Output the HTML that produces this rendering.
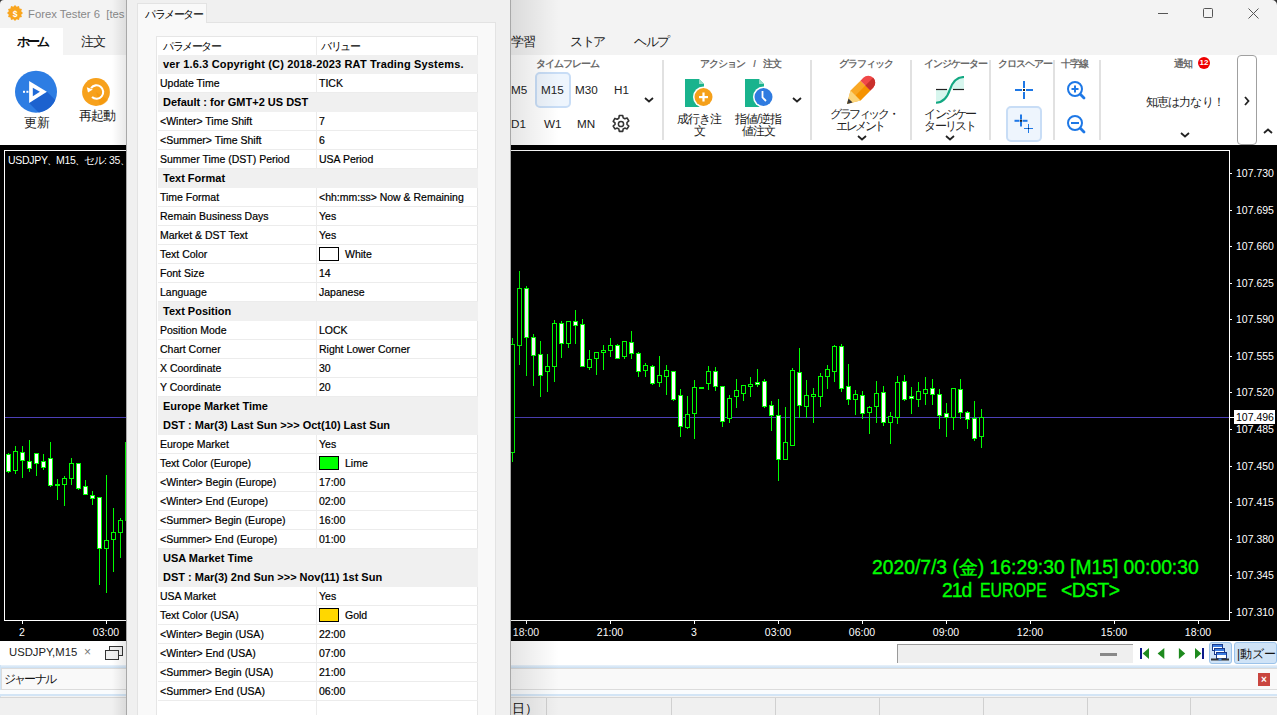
<!DOCTYPE html>
<html><head><meta charset="utf-8"><style>
*{margin:0;padding:0;box-sizing:border-box}
html,body{width:1277px;height:715px;overflow:hidden;background:#f3f3f3;font-family:"Liberation Sans",sans-serif;color:#000;position:relative}
.a{position:absolute;white-space:pre}
#title{position:absolute;left:0;top:0;width:1277px;height:55px;background:#f3f3f3}
#ribbon{position:absolute;left:0;top:55px;width:1277px;height:90px;background:#fff}
#chart{position:absolute;left:0;top:145px;width:1277px;height:496px;background:#000}
svg text.ax{font-family:"Liberation Sans",sans-serif;font-size:10.5px;fill:#fff}
.sep{position:absolute;top:60px;width:2px;height:80px;background:#e1e1e1}
.glbl{position:absolute;top:57px;font-size:9.5px;font-weight:bold;letter-spacing:-1px;color:#6a6a6a;white-space:pre}
.btxt{position:absolute;font-size:12px;color:#222;white-space:pre;text-align:center;line-height:12px}
.tf{position:absolute;font-size:11.7px;color:#222;white-space:pre}
/* dialog */
#dlg{position:absolute;left:126px;top:0;width:385px;height:715px;background:#f0f0f0;border-left:1px solid #a8a8a8;border-right:1px solid #a8a8a8}
#shadowL{position:absolute;left:112px;top:0;width:16px;height:715px;background:linear-gradient(to right,rgba(0,0,0,0),rgba(0,0,0,0.10))}
#shadowR{position:absolute;left:511px;top:0;width:48px;height:715px;background:linear-gradient(to right,rgba(0,0,0,0.10),rgba(0,0,0,0))}
#tab{position:absolute;left:10px;top:3px;width:70px;height:20px;background:#f9f9f9;border:1px solid #e3e3e3;border-bottom:none;font-size:10.5px;letter-spacing:-1.5px;padding:4px 0 0 7px;white-space:pre;overflow:hidden;z-index:2}
#panel{position:absolute;left:10px;top:22px;width:359px;height:700px;background:#f9f9f9;border:1px solid #e3e3e3}
#grid{position:absolute;left:29px;top:36px;width:322px;height:690px;background:#fff;border:1px solid #e6e6e6}
.hdr{position:absolute;top:0;height:18px;font-size:10.5px;letter-spacing:-1.5px;line-height:18px;white-space:pre}
.sec{position:absolute;left:1px;width:320px;height:19px;background:#f0f0f0;font-weight:bold;font-size:11px;line-height:19px;padding-left:5px;white-space:pre;margin-top:-37px}
.row{position:absolute;left:1px;width:320px;height:19px;border-bottom:1px solid #ececec;font-size:10.5px;line-height:18px;white-space:pre;margin-top:-37px;-webkit-text-stroke:0.2px #000}
.row .k{position:absolute;left:2px;top:0}
.row .v{position:absolute;left:161px;top:0}
.sw{position:absolute;left:0;top:2px;width:20px;height:14px;border:1px solid #000}
#coldiv{position:absolute;left:159px;top:0;width:1px;height:690px;background:#ececec}

</style></head><body>
<div id="title">
  <svg class="a" style="left:6px;top:4px" width="18" height="18" viewBox="0 0 18 18">
    <polygon points="9.00,1.00 10.66,2.82 13.00,2.07 13.53,4.47 15.93,5.00 15.18,7.34 17.00,9.00 15.18,10.66 15.93,13.00 13.53,13.53 13.00,15.93 10.66,15.18 9.00,17.00 7.34,15.18 5.00,15.93 4.47,13.53 2.07,13.00 2.82,10.66 1.00,9.00 2.82,7.34 2.07,5.00 4.47,4.47 5.00,2.07 7.34,2.82" fill="#f9a51e"/>
    <text x="9" y="12.6" font-size="8.5" font-weight="bold" fill="#fff" text-anchor="middle" font-family="Liberation Sans">$</text>
  </svg>
  <div class="a" style="left:28px;top:8px;font-size:11.3px;color:#888">Forex Tester 6  [tes</div>
  <div class="a" style="left:0;top:28px;width:63px;height:27px;background:#fff"></div>
  <div class="a" style="left:17px;top:34px;font-size:12.5px;font-weight:bold;letter-spacing:-2.8px;color:#111">ホーム</div>
  <div class="a" style="left:81px;top:34px;font-size:12.5px;letter-spacing:-1.5px;color:#222">注文</div>
  <div class="a" style="left:511px;top:34px;font-size:12.5px;letter-spacing:-1.5px;color:#222">学習</div>
  <div class="a" style="left:570px;top:34px;font-size:12.5px;letter-spacing:-1.5px;color:#222">ストア</div>
  <div class="a" style="left:634px;top:34px;font-size:12.5px;letter-spacing:-1.5px;color:#222">ヘルプ</div>
  <div class="a" style="left:1158px;top:13px;width:10px;height:1px;background:#555"></div>
  <div class="a" style="left:1203px;top:8px;width:10px;height:10px;border:1px solid #555;border-radius:1.5px"></div>
  <svg class="a" style="left:1248px;top:8px" width="11" height="11"><path d="M0.5 0.5L10.5 10.5M10.5 0.5L0.5 10.5" stroke="#555" stroke-width="1"/></svg>
</div>
<svg class="a" style="left:0;top:0" width="4" height="4"><path d="M0 0H4A4 4 0 0 0 0 4Z" fill="#333"/></svg>
<svg class="a" style="left:1272px;top:0" width="5" height="5"><path d="M5 0H0A5 5 0 0 1 5 5Z" fill="#333"/></svg>
<div id="ribbon">
  <!-- refresh -->
  <svg class="a" style="left:14px;top:15px" width="44" height="44" viewBox="0 0 44 44">
    <defs><clipPath id="cc"><circle cx="22" cy="21.7" r="21"/></clipPath></defs>
    <circle cx="22" cy="21.7" r="21" fill="#2d7de3"/>
    <path d="M33 21.8 L46 34.8 L30 48 L15.1 32.9 Z" fill="#1c62cf" clip-path="url(#cc)"/>
    <path d="M15.1 11.1 L32.9 21.8 L15.1 32.9 Z" fill="#fff"/>
    <path d="M18.8 17.8 L25.9 21.8 L18.8 26.2 Z" fill="#1f6ad8"/>
    <rect x="9" y="20.8" width="2" height="2" fill="#fff"/><rect x="12.4" y="20.8" width="2" height="2" fill="#fff"/>
  </svg>
  <div class="btxt" style="left:24px;top:62px;font-size:12.5px">更新</div>
  <svg class="a" style="left:82px;top:23px" width="28" height="28" viewBox="0 0 28 28">
    <circle cx="14" cy="14" r="13.9" fill="#f7a11c"/>
    <path d="M14 14 L26 22 A13.9 13.9 0 0 1 18 27.5 Z" fill="#f39300" opacity="0.5"/>
    <path d="M9.08 10.06 A6.7 6.7 0 1 1 10.02 18.98" fill="none" stroke="#fff" stroke-width="2.1"/>
    <path d="M4.8 9.2 L10.8 11.6 L6 14.4 Z" fill="#fff"/>
  </svg>
  <div class="btxt" style="left:79px;top:55px;font-size:12.5px;letter-spacing:-1px">再起動</div>

  <!-- timeframe group -->
  <div class="glbl" style="left:536px;top:3px">タイムフレーム</div>
  <div class="a" style="left:535px;top:17px;width:36px;height:36px;background:#eef5fd;border:2px solid #c8ddf6;border-radius:5px"></div>
  <div class="tf" style="left:511px;top:28px">M5</div>
  <div class="tf" style="left:541px;top:28px">M15</div>
  <div class="tf" style="left:575px;top:28px">M30</div>
  <div class="tf" style="left:614px;top:28px">H1</div>
  <div class="tf" style="left:511px;top:62px">D1</div>
  <div class="tf" style="left:544px;top:62px">W1</div>
  <div class="tf" style="left:577px;top:62px">MN</div>
  <svg class="a" style="left:611px;top:59px" width="20" height="20" viewBox="0 0 20 20">
    <path d="M8.3 1.5h3.4l.5 2.4 1.6.9 2.3-.8 1.7 2.9-1.8 1.6v1.9l1.8 1.6-1.7 2.9-2.3-.8-1.6.9-.5 2.4H8.3l-.5-2.4-1.6-.9-2.3.8-1.7-2.9 1.8-1.6V8.9L2.2 7.3l1.7-2.9 2.3.8 1.6-.9z" fill="none" stroke="#333" stroke-width="1.6" stroke-linejoin="round"/>
    <circle cx="10" cy="10" r="2.6" fill="none" stroke="#333" stroke-width="1.5"/>
  </svg>
  <svg class="a" style="left:644px;top:42px" width="10" height="6"><path d="M1 1L5 4.5L9 1" fill="none" stroke="#222" stroke-width="1.8"/></svg>
  <div class="sep" style="left:662px;top:5px"></div>

  <!-- action group -->
  <div class="glbl" style="left:700px;top:3px">アクション     /     注文</div>
  <svg class="a" style="left:684px;top:24px" width="32" height="30" viewBox="0 0 32 30">
    <path d="M1 0 H15 L20 5 V28 H1 Z" fill="#19b38d"/>
    <path d="M15 0 L20 5 H15 Z" fill="#8fdcc6"/>
    <circle cx="19.5" cy="18" r="10.5" fill="#fff"/>
    <circle cx="19.5" cy="18" r="9" fill="#f5a01a"/>
    <rect x="15" y="17" width="9" height="2.2" fill="#fff"/><rect x="18.4" y="13.5" width="2.2" height="9" fill="#fff"/>
  </svg>
  <div class="btxt" style="left:672px;top:58px;width:54px;letter-spacing:-1px">成行き注<br>文</div>
  <svg class="a" style="left:744px;top:24px" width="32" height="30" viewBox="0 0 32 30">
    <path d="M1 0 H15 L20 5 V28 H1 Z" fill="#19b38d"/>
    <path d="M15 0 L20 5 H15 Z" fill="#8fdcc6"/>
    <circle cx="19.5" cy="18" r="10.5" fill="#fff"/>
    <circle cx="19.5" cy="18" r="9" fill="#2f7be0"/>
    <path d="M18.5 12 V18.5 L22 22" fill="none" stroke="#fff" stroke-width="1.8"/>
  </svg>
  <div class="btxt" style="left:729px;top:58px;width:58px;letter-spacing:-1px">指値/逆指<br>値注文</div>
  <svg class="a" style="left:792px;top:42px" width="10" height="6"><path d="M1 1L5 4.5L9 1" fill="none" stroke="#222" stroke-width="1.8"/></svg>
  <div class="sep" style="left:810px;top:5px"></div>

  <!-- graphic -->
  <div class="glbl" style="left:839px;top:3px">グラフィック</div>
  <svg class="a" style="left:835px;top:13px" width="45" height="45" viewBox="0 0 45 45">
    <g transform="translate(12,36) rotate(-45)">
      <path d="M0 0 L12 -7 H26 V7 H12 Z" fill="#f9a825"/>
      <rect x="12" y="0" width="14" height="7" fill="#f59300"/>
      <path d="M0 0 L12 -7 V7 Z" fill="#fbd47a"/>
      <path d="M0 0 L5 -2.9 V2.9 Z" fill="#3a3a3a"/>
      <path d="M26 -7 H30 A7 7 0 0 1 30 7 H26 Z" fill="#f04848"/>
      <path d="M26 0 H37 A7 7 0 0 1 30 7 H26 Z" fill="#c9302c"/>
    </g>
  </svg>
  <div class="btxt" style="left:830px;top:53px;width:60px;letter-spacing:-2.4px">グラフィック・<br>エレメント</div>
  <svg class="a" style="left:857px;top:80px" width="10" height="6"><path d="M1 1L5 4.5L9 1" fill="none" stroke="#222" stroke-width="1.8"/></svg>
  <div class="sep" style="left:910px;top:5px"></div>

  <!-- indicator -->
  <div class="glbl" style="left:924px;top:3px">インジケーター</div>
  <svg class="a" style="left:936px;top:21px" width="30" height="30" viewBox="0 0 30 30">
    <path d="M0 13.4 H14 C11.5 21 8 26.7 0 26.7 Z" fill="#d7f6ee"/>
    <path d="M14 13.4 C16.5 6 20 1 28 1 V13.4 Z" fill="#d7f6ee"/>
    <path d="M0 26.7 C8 26.7 11.5 21 14 13.4 C16.5 6 20 1 28 1" fill="none" stroke="#12a882" stroke-width="2.1"/>
    <rect x="0" y="12.9" width="11" height="1.2" fill="#222"/><rect x="17" y="12.9" width="11" height="1.2" fill="#222"/>
  </svg>
  <div class="btxt" style="left:920px;top:53px;width:60px;letter-spacing:-1.8px">インジケー<br>ターリスト</div>
  <svg class="a" style="left:945px;top:80px" width="10" height="6"><path d="M1 1L5 4.5L9 1" fill="none" stroke="#222" stroke-width="1.8"/></svg>
  <div class="sep" style="left:989px;top:5px"></div>

  <!-- crosshair -->
  <div class="glbl" style="left:998px;top:3px">クロスヘアー</div>
  <svg class="a" style="left:1014px;top:25px" width="20" height="20">
    <rect x="9" y="1" width="2" height="7" fill="#1e78e6"/><rect x="9" y="12" width="2" height="7" fill="#1e78e6"/>
    <rect x="1" y="9" width="7" height="2" fill="#1e78e6"/><rect x="12" y="9" width="7" height="2" fill="#1e78e6"/>
    <rect x="9" y="9" width="2" height="2" fill="#222"/>
  </svg>
  <div class="a" style="left:1006px;top:51px;width:36px;height:36px;background:#eef5fd;border:2px solid #c8ddf6;border-radius:5px"></div>
  <svg class="a" style="left:1012px;top:58px" width="24" height="22">
    <rect x="8" y="1.5" width="2" height="5" fill="#1e78e6"/><rect x="8" y="8.5" width="2" height="5" fill="#1e78e6"/>
    <rect x="2.5" y="6.8" width="5" height="2" fill="#1e78e6"/><rect x="10.5" y="6.8" width="5" height="2" fill="#1e78e6"/>
    <rect x="8" y="6.8" width="2" height="2" fill="#222"/>
    <rect x="16" y="11" width="1" height="4" fill="#1e78e6"/><rect x="16" y="16" width="1" height="4" fill="#1e78e6"/>
    <rect x="12" y="15" width="4" height="1" fill="#1e78e6"/><rect x="17" y="15" width="4" height="1" fill="#1e78e6"/>
    <rect x="16" y="15" width="1" height="1" fill="#222"/>
  </svg>
  <div class="sep" style="left:1053px;top:5px"></div>

  <div class="glbl" style="left:1061px;top:3px">十字線</div>
  <svg class="a" style="left:1066px;top:25px" width="20" height="20">
    <circle cx="9" cy="9" r="7" fill="none" stroke="#1e78e6" stroke-width="2"/>
    <path d="M14.3 14.3 L18 18" stroke="#1e78e6" stroke-width="2.8" stroke-linecap="round"/>
    <rect x="5.5" y="8" width="7" height="2" fill="#1e78e6"/><rect x="8" y="5.5" width="2" height="7" fill="#1e78e6"/>
  </svg>
  <svg class="a" style="left:1066px;top:59px" width="20" height="20">
    <circle cx="9" cy="9" r="7" fill="none" stroke="#1e78e6" stroke-width="2"/>
    <path d="M14.3 14.3 L18 18" stroke="#1e78e6" stroke-width="2.8" stroke-linecap="round"/>
    <rect x="5" y="8" width="8" height="2" fill="#1e78e6"/>
  </svg>
  <div class="sep" style="left:1099px;top:5px"></div>

  <div class="glbl" style="left:1174px;top:3px">通知</div>
  <div class="a" style="left:1198px;top:2px;width:12px;height:12px;border-radius:6px;background:#e00;color:#fff;font-size:8px;font-weight:bold;line-height:12px;text-align:center">12</div>
  <div class="a" style="left:1146px;top:39px;font-size:12px;letter-spacing:-0.9px;color:#222">知恵は力なり！</div>
  <svg class="a" style="left:1180px;top:77px" width="10" height="6"><path d="M1 1L5 4.5L9 1" fill="none" stroke="#222" stroke-width="1.8"/></svg>
  <div class="a" style="left:1237px;top:0px;width:20px;height:90px;border:1px solid #a0a0a0;border-radius:4px"></div>
  <svg class="a" style="left:1244px;top:41px" width="6" height="10"><path d="M1 1L4.5 5L1 9" fill="none" stroke="#222" stroke-width="1.8"/></svg>
  <svg class="a" style="left:1263px;top:73px" width="10" height="6"><path d="M1 5L5 1.5L9 5" fill="none" stroke="#222" stroke-width="1.8"/></svg>
</div>

<div id="chart">
<svg width="1277" height="496" viewBox="0 145 1277 496" style="position:absolute;left:0;top:0" shape-rendering="crispEdges">
  <rect x="4" y="150" width="1226" height="1" fill="#fff"/>
  <rect x="4" y="150" width="1" height="471" fill="#fff"/>
  <rect x="1229" y="150" width="1" height="471" fill="#fff"/>
  <rect x="4" y="620" width="1226" height="1" fill="#fff"/>
  <rect x="5" y="417" width="1224" height="1" fill="#4d40b8"/>
  <rect x="512" y="338" width="1" height="6" fill="#00ff00"/><rect x="512" y="453" width="1" height="9" fill="#00ff00"/><rect x="510" y="344" width="5" height="109" fill="#00ff00"/><rect x="511" y="345" width="3" height="107" fill="#000000"/>
<rect x="519" y="271" width="1" height="17" fill="#00ff00"/><rect x="519" y="346" width="1" height="19" fill="#00ff00"/><rect x="517" y="288" width="5" height="58" fill="#00ff00"/><rect x="518" y="289" width="3" height="56" fill="#000000"/>
<rect x="526" y="286" width="1" height="2" fill="#00ff00"/><rect x="526" y="338" width="1" height="38" fill="#00ff00"/><rect x="524" y="288" width="5" height="50" fill="#00ff00"/><rect x="525" y="289" width="3" height="48" fill="#ffffff"/>
<rect x="533" y="334" width="1" height="3" fill="#00ff00"/><rect x="533" y="356" width="1" height="30" fill="#00ff00"/><rect x="531" y="337" width="5" height="19" fill="#00ff00"/><rect x="532" y="338" width="3" height="17" fill="#ffffff"/>
<rect x="540" y="341" width="1" height="13" fill="#00ff00"/><rect x="540" y="376" width="1" height="21" fill="#00ff00"/><rect x="538" y="354" width="5" height="22" fill="#00ff00"/><rect x="539" y="355" width="3" height="20" fill="#ffffff"/>
<rect x="547" y="354" width="1" height="12" fill="#00ff00"/><rect x="547" y="372" width="1" height="20" fill="#00ff00"/><rect x="545" y="366" width="5" height="6" fill="#00ff00"/><rect x="546" y="367" width="3" height="4" fill="#000000"/>
<rect x="554" y="320" width="1" height="3" fill="#00ff00"/><rect x="554" y="367" width="1" height="15" fill="#00ff00"/><rect x="552" y="323" width="5" height="44" fill="#00ff00"/><rect x="553" y="324" width="3" height="42" fill="#000000"/>
<rect x="561" y="321" width="1" height="2" fill="#00ff00"/><rect x="561" y="344" width="1" height="14" fill="#00ff00"/><rect x="559" y="323" width="5" height="21" fill="#00ff00"/><rect x="560" y="324" width="3" height="19" fill="#ffffff"/>
<rect x="568" y="344" width="1" height="4" fill="#00ff00"/><rect x="566" y="321" width="5" height="23" fill="#00ff00"/><rect x="567" y="322" width="3" height="21" fill="#000000"/>
<rect x="575" y="310" width="1" height="11" fill="#00ff00"/><rect x="575" y="326" width="1" height="18" fill="#00ff00"/><rect x="573" y="321" width="5" height="5" fill="#00ff00"/><rect x="574" y="322" width="3" height="3" fill="#ffffff"/>
<rect x="582" y="319" width="1" height="5" fill="#00ff00"/><rect x="580" y="324" width="5" height="43" fill="#00ff00"/><rect x="581" y="325" width="3" height="41" fill="#ffffff"/>
<rect x="589" y="350" width="1" height="9" fill="#00ff00"/><rect x="589" y="368" width="1" height="2" fill="#00ff00"/><rect x="587" y="359" width="5" height="9" fill="#00ff00"/><rect x="588" y="360" width="3" height="7" fill="#000000"/>
<rect x="596" y="359" width="1" height="16" fill="#00ff00"/><rect x="594" y="352" width="5" height="7" fill="#00ff00"/><rect x="595" y="353" width="3" height="5" fill="#000000"/>
<rect x="603" y="345" width="1" height="5" fill="#00ff00"/><rect x="603" y="353" width="1" height="17" fill="#00ff00"/><rect x="601" y="350" width="5" height="3" fill="#00ff00"/><rect x="602" y="351" width="3" height="1" fill="#000000"/>
<rect x="610" y="338" width="1" height="7" fill="#00ff00"/><rect x="610" y="351" width="1" height="6" fill="#00ff00"/><rect x="608" y="345" width="5" height="6" fill="#00ff00"/><rect x="609" y="346" width="3" height="4" fill="#000000"/>
<rect x="617" y="344" width="1" height="1" fill="#00ff00"/><rect x="615" y="345" width="5" height="14" fill="#00ff00"/><rect x="616" y="346" width="3" height="12" fill="#ffffff"/>
<rect x="624" y="357" width="1" height="2" fill="#00ff00"/><rect x="622" y="341" width="5" height="16" fill="#00ff00"/><rect x="623" y="342" width="3" height="14" fill="#000000"/>
<rect x="631" y="331" width="1" height="11" fill="#00ff00"/><rect x="631" y="354" width="1" height="5" fill="#00ff00"/><rect x="629" y="342" width="5" height="12" fill="#00ff00"/><rect x="630" y="343" width="3" height="10" fill="#ffffff"/>
<rect x="638" y="352" width="1" height="1" fill="#00ff00"/><rect x="638" y="372" width="1" height="5" fill="#00ff00"/><rect x="636" y="353" width="5" height="19" fill="#00ff00"/><rect x="637" y="354" width="3" height="17" fill="#ffffff"/>
<rect x="645" y="363" width="1" height="2" fill="#00ff00"/><rect x="645" y="371" width="1" height="6" fill="#00ff00"/><rect x="643" y="365" width="5" height="6" fill="#00ff00"/><rect x="644" y="366" width="3" height="4" fill="#000000"/>
<rect x="652" y="365" width="1" height="1" fill="#00ff00"/><rect x="652" y="384" width="1" height="1" fill="#00ff00"/><rect x="650" y="366" width="5" height="18" fill="#00ff00"/><rect x="651" y="367" width="3" height="16" fill="#ffffff"/>
<rect x="659" y="356" width="1" height="19" fill="#00ff00"/><rect x="659" y="383" width="1" height="4" fill="#00ff00"/><rect x="657" y="375" width="5" height="8" fill="#00ff00"/><rect x="658" y="376" width="3" height="6" fill="#000000"/>
<rect x="666" y="365" width="1" height="5" fill="#00ff00"/><rect x="666" y="377" width="1" height="18" fill="#00ff00"/><rect x="664" y="370" width="5" height="7" fill="#00ff00"/><rect x="665" y="371" width="3" height="5" fill="#000000"/>
<rect x="673" y="400" width="1" height="1" fill="#00ff00"/><rect x="671" y="371" width="5" height="29" fill="#00ff00"/><rect x="672" y="372" width="3" height="27" fill="#ffffff"/>
<rect x="680" y="389" width="1" height="6" fill="#00ff00"/><rect x="680" y="427" width="1" height="10" fill="#00ff00"/><rect x="678" y="395" width="5" height="32" fill="#00ff00"/><rect x="679" y="396" width="3" height="30" fill="#ffffff"/>
<rect x="687" y="396" width="1" height="18" fill="#00ff00"/><rect x="687" y="428" width="1" height="1" fill="#00ff00"/><rect x="685" y="414" width="5" height="14" fill="#00ff00"/><rect x="686" y="415" width="3" height="12" fill="#000000"/>
<rect x="694" y="380" width="1" height="7" fill="#00ff00"/><rect x="694" y="414" width="1" height="25" fill="#00ff00"/><rect x="692" y="387" width="5" height="27" fill="#00ff00"/><rect x="693" y="388" width="3" height="25" fill="#000000"/>
<rect x="699" y="387" width="5" height="2" fill="#00ff00"/>
<rect x="708" y="366" width="1" height="5" fill="#00ff00"/><rect x="708" y="384" width="1" height="6" fill="#00ff00"/><rect x="706" y="371" width="5" height="13" fill="#00ff00"/><rect x="707" y="372" width="3" height="11" fill="#000000"/>
<rect x="715" y="367" width="1" height="4" fill="#00ff00"/><rect x="715" y="387" width="1" height="4" fill="#00ff00"/><rect x="713" y="371" width="5" height="16" fill="#00ff00"/><rect x="714" y="372" width="3" height="14" fill="#ffffff"/>
<rect x="722" y="422" width="1" height="5" fill="#00ff00"/><rect x="720" y="386" width="5" height="36" fill="#00ff00"/><rect x="721" y="387" width="3" height="34" fill="#ffffff"/>
<rect x="729" y="395" width="1" height="3" fill="#00ff00"/><rect x="729" y="419" width="1" height="4" fill="#00ff00"/><rect x="727" y="398" width="5" height="21" fill="#00ff00"/><rect x="728" y="399" width="3" height="19" fill="#000000"/>
<rect x="736" y="379" width="1" height="11" fill="#00ff00"/><rect x="736" y="397" width="1" height="11" fill="#00ff00"/><rect x="734" y="390" width="5" height="7" fill="#00ff00"/><rect x="735" y="391" width="3" height="5" fill="#000000"/>
<rect x="743" y="394" width="1" height="7" fill="#00ff00"/><rect x="741" y="385" width="5" height="9" fill="#00ff00"/><rect x="742" y="386" width="3" height="7" fill="#000000"/>
<rect x="750" y="377" width="1" height="7" fill="#00ff00"/><rect x="750" y="387" width="1" height="10" fill="#00ff00"/><rect x="748" y="384" width="5" height="3" fill="#00ff00"/><rect x="749" y="385" width="3" height="1" fill="#000000"/>
<rect x="757" y="369" width="1" height="13" fill="#00ff00"/><rect x="757" y="385" width="1" height="2" fill="#00ff00"/><rect x="755" y="382" width="5" height="3" fill="#00ff00"/><rect x="756" y="383" width="3" height="1" fill="#ffffff"/>
<rect x="764" y="379" width="1" height="2" fill="#00ff00"/><rect x="764" y="407" width="1" height="1" fill="#00ff00"/><rect x="762" y="381" width="5" height="26" fill="#00ff00"/><rect x="763" y="382" width="3" height="24" fill="#ffffff"/>
<rect x="771" y="401" width="1" height="4" fill="#00ff00"/><rect x="771" y="416" width="1" height="15" fill="#00ff00"/><rect x="769" y="405" width="5" height="11" fill="#00ff00"/><rect x="770" y="406" width="3" height="9" fill="#ffffff"/>
<rect x="778" y="399" width="1" height="16" fill="#00ff00"/><rect x="778" y="460" width="1" height="21" fill="#00ff00"/><rect x="776" y="415" width="5" height="45" fill="#00ff00"/><rect x="777" y="416" width="3" height="43" fill="#ffffff"/>
<rect x="785" y="407" width="1" height="35" fill="#00ff00"/><rect x="783" y="442" width="5" height="18" fill="#00ff00"/><rect x="784" y="443" width="3" height="16" fill="#000000"/>
<rect x="792" y="368" width="1" height="2" fill="#00ff00"/><rect x="790" y="370" width="5" height="76" fill="#00ff00"/><rect x="791" y="371" width="3" height="74" fill="#000000"/>
<rect x="799" y="348" width="1" height="24" fill="#00ff00"/><rect x="799" y="406" width="1" height="12" fill="#00ff00"/><rect x="797" y="372" width="5" height="34" fill="#00ff00"/><rect x="798" y="373" width="3" height="32" fill="#ffffff"/>
<rect x="806" y="380" width="1" height="15" fill="#00ff00"/><rect x="806" y="407" width="1" height="11" fill="#00ff00"/><rect x="804" y="395" width="5" height="12" fill="#00ff00"/><rect x="805" y="396" width="3" height="10" fill="#000000"/>
<rect x="813" y="388" width="1" height="6" fill="#00ff00"/><rect x="813" y="397" width="1" height="26" fill="#00ff00"/><rect x="811" y="394" width="5" height="3" fill="#00ff00"/><rect x="812" y="395" width="3" height="1" fill="#000000"/>
<rect x="820" y="373" width="1" height="3" fill="#00ff00"/><rect x="820" y="397" width="1" height="10" fill="#00ff00"/><rect x="818" y="376" width="5" height="21" fill="#00ff00"/><rect x="819" y="377" width="3" height="19" fill="#000000"/>
<rect x="827" y="365" width="1" height="4" fill="#00ff00"/><rect x="827" y="377" width="1" height="12" fill="#00ff00"/><rect x="825" y="369" width="5" height="8" fill="#00ff00"/><rect x="826" y="370" width="3" height="6" fill="#000000"/>
<rect x="834" y="345" width="1" height="1" fill="#00ff00"/><rect x="834" y="372" width="1" height="10" fill="#00ff00"/><rect x="832" y="346" width="5" height="26" fill="#00ff00"/><rect x="833" y="347" width="3" height="24" fill="#000000"/>
<rect x="841" y="344" width="1" height="2" fill="#00ff00"/><rect x="841" y="389" width="1" height="3" fill="#00ff00"/><rect x="839" y="346" width="5" height="43" fill="#00ff00"/><rect x="840" y="347" width="3" height="41" fill="#ffffff"/>
<rect x="848" y="364" width="1" height="22" fill="#00ff00"/><rect x="848" y="400" width="1" height="5" fill="#00ff00"/><rect x="846" y="386" width="5" height="14" fill="#00ff00"/><rect x="847" y="387" width="3" height="12" fill="#ffffff"/>
<rect x="855" y="390" width="1" height="4" fill="#00ff00"/><rect x="855" y="400" width="1" height="15" fill="#00ff00"/><rect x="853" y="394" width="5" height="6" fill="#00ff00"/><rect x="854" y="395" width="3" height="4" fill="#000000"/>
<rect x="862" y="391" width="1" height="4" fill="#00ff00"/><rect x="862" y="414" width="1" height="5" fill="#00ff00"/><rect x="860" y="395" width="5" height="19" fill="#00ff00"/><rect x="861" y="396" width="3" height="17" fill="#ffffff"/>
<rect x="869" y="406" width="1" height="1" fill="#00ff00"/><rect x="869" y="413" width="1" height="21" fill="#00ff00"/><rect x="867" y="407" width="5" height="6" fill="#00ff00"/><rect x="868" y="408" width="3" height="4" fill="#000000"/>
<rect x="876" y="381" width="1" height="12" fill="#00ff00"/><rect x="876" y="407" width="1" height="16" fill="#00ff00"/><rect x="874" y="393" width="5" height="14" fill="#00ff00"/><rect x="875" y="394" width="3" height="12" fill="#000000"/>
<rect x="883" y="386" width="1" height="6" fill="#00ff00"/><rect x="883" y="423" width="1" height="3" fill="#00ff00"/><rect x="881" y="392" width="5" height="31" fill="#00ff00"/><rect x="882" y="393" width="3" height="29" fill="#ffffff"/>
<rect x="890" y="412" width="1" height="4" fill="#00ff00"/><rect x="890" y="423" width="1" height="21" fill="#00ff00"/><rect x="888" y="416" width="5" height="7" fill="#00ff00"/><rect x="889" y="417" width="3" height="5" fill="#000000"/>
<rect x="897" y="376" width="1" height="6" fill="#00ff00"/><rect x="897" y="418" width="1" height="6" fill="#00ff00"/><rect x="895" y="382" width="5" height="36" fill="#00ff00"/><rect x="896" y="383" width="3" height="34" fill="#000000"/>
<rect x="904" y="375" width="1" height="6" fill="#00ff00"/><rect x="904" y="400" width="1" height="1" fill="#00ff00"/><rect x="902" y="381" width="5" height="19" fill="#00ff00"/><rect x="903" y="382" width="3" height="17" fill="#ffffff"/>
<rect x="911" y="387" width="1" height="9" fill="#00ff00"/><rect x="911" y="399" width="1" height="15" fill="#00ff00"/><rect x="909" y="396" width="5" height="3" fill="#00ff00"/><rect x="910" y="397" width="3" height="1" fill="#ffffff"/>
<rect x="918" y="382" width="1" height="9" fill="#00ff00"/><rect x="918" y="400" width="1" height="7" fill="#00ff00"/><rect x="916" y="391" width="5" height="9" fill="#00ff00"/><rect x="917" y="392" width="3" height="7" fill="#000000"/>
<rect x="925" y="377" width="1" height="12" fill="#00ff00"/><rect x="925" y="394" width="1" height="11" fill="#00ff00"/><rect x="923" y="389" width="5" height="5" fill="#00ff00"/><rect x="924" y="390" width="3" height="3" fill="#000000"/>
<rect x="932" y="379" width="1" height="9" fill="#00ff00"/><rect x="932" y="395" width="1" height="10" fill="#00ff00"/><rect x="930" y="388" width="5" height="7" fill="#00ff00"/><rect x="931" y="389" width="3" height="5" fill="#ffffff"/>
<rect x="939" y="389" width="1" height="5" fill="#00ff00"/><rect x="939" y="416" width="1" height="13" fill="#00ff00"/><rect x="937" y="394" width="5" height="22" fill="#00ff00"/><rect x="938" y="395" width="3" height="20" fill="#ffffff"/>
<rect x="946" y="403" width="1" height="10" fill="#00ff00"/><rect x="946" y="418" width="1" height="19" fill="#00ff00"/><rect x="944" y="413" width="5" height="5" fill="#00ff00"/><rect x="945" y="414" width="3" height="3" fill="#ffffff"/>
<rect x="953" y="418" width="1" height="12" fill="#00ff00"/><rect x="951" y="388" width="5" height="30" fill="#00ff00"/><rect x="952" y="389" width="3" height="28" fill="#000000"/>
<rect x="960" y="379" width="1" height="10" fill="#00ff00"/><rect x="960" y="413" width="1" height="6" fill="#00ff00"/><rect x="958" y="389" width="5" height="24" fill="#00ff00"/><rect x="959" y="390" width="3" height="22" fill="#ffffff"/>
<rect x="967" y="411" width="1" height="1" fill="#00ff00"/><rect x="967" y="420" width="1" height="9" fill="#00ff00"/><rect x="965" y="412" width="5" height="8" fill="#00ff00"/><rect x="966" y="413" width="3" height="6" fill="#ffffff"/>
<rect x="974" y="401" width="1" height="17" fill="#00ff00"/><rect x="974" y="439" width="1" height="2" fill="#00ff00"/><rect x="972" y="418" width="5" height="21" fill="#00ff00"/><rect x="973" y="419" width="3" height="19" fill="#ffffff"/>
<rect x="981" y="409" width="1" height="8" fill="#00ff00"/><rect x="981" y="437" width="1" height="11" fill="#00ff00"/><rect x="979" y="417" width="5" height="20" fill="#00ff00"/><rect x="980" y="418" width="3" height="18" fill="#000000"/>
<rect x="8" y="453" width="1" height="1" fill="#00ff00"/><rect x="8" y="472" width="1" height="1" fill="#00ff00"/><rect x="6" y="454" width="5" height="18" fill="#00ff00"/><rect x="7" y="455" width="3" height="16" fill="#ffffff"/>
<rect x="15" y="446" width="1" height="5" fill="#00ff00"/><rect x="15" y="471" width="1" height="3" fill="#00ff00"/><rect x="13" y="451" width="5" height="20" fill="#00ff00"/><rect x="14" y="452" width="3" height="18" fill="#000000"/>
<rect x="22" y="446" width="1" height="6" fill="#00ff00"/><rect x="22" y="461" width="1" height="17" fill="#00ff00"/><rect x="20" y="452" width="5" height="9" fill="#00ff00"/><rect x="21" y="453" width="3" height="7" fill="#ffffff"/>
<rect x="29" y="440" width="1" height="21" fill="#00ff00"/><rect x="29" y="469" width="1" height="3" fill="#00ff00"/><rect x="27" y="461" width="5" height="8" fill="#00ff00"/><rect x="28" y="462" width="3" height="6" fill="#ffffff"/>
<rect x="36" y="464" width="1" height="12" fill="#00ff00"/><rect x="34" y="453" width="5" height="11" fill="#00ff00"/><rect x="35" y="454" width="3" height="9" fill="#ffffff"/>
<rect x="43" y="454" width="1" height="7" fill="#00ff00"/><rect x="43" y="468" width="1" height="2" fill="#00ff00"/><rect x="41" y="461" width="5" height="7" fill="#00ff00"/><rect x="42" y="462" width="3" height="5" fill="#ffffff"/>
<rect x="50" y="442" width="1" height="16" fill="#00ff00"/><rect x="50" y="486" width="1" height="1" fill="#00ff00"/><rect x="48" y="458" width="5" height="28" fill="#00ff00"/><rect x="49" y="459" width="3" height="26" fill="#ffffff"/>
<rect x="57" y="479" width="1" height="5" fill="#00ff00"/><rect x="57" y="485" width="1" height="15" fill="#00ff00"/><rect x="55" y="484" width="5" height="2" fill="#00ff00"/>
<rect x="64" y="476" width="1" height="2" fill="#00ff00"/><rect x="64" y="485" width="1" height="21" fill="#00ff00"/><rect x="62" y="478" width="5" height="7" fill="#00ff00"/><rect x="63" y="479" width="3" height="5" fill="#000000"/>
<rect x="71" y="458" width="1" height="5" fill="#00ff00"/><rect x="71" y="479" width="1" height="6" fill="#00ff00"/><rect x="69" y="463" width="5" height="16" fill="#00ff00"/><rect x="70" y="464" width="3" height="14" fill="#000000"/>
<rect x="78" y="489" width="1" height="1" fill="#00ff00"/><rect x="76" y="463" width="5" height="26" fill="#00ff00"/><rect x="77" y="464" width="3" height="24" fill="#ffffff"/>
<rect x="85" y="480" width="1" height="6" fill="#00ff00"/><rect x="83" y="486" width="5" height="9" fill="#00ff00"/><rect x="84" y="487" width="3" height="7" fill="#ffffff"/>
<rect x="92" y="491" width="1" height="4" fill="#00ff00"/><rect x="92" y="499" width="1" height="6" fill="#00ff00"/><rect x="90" y="495" width="5" height="4" fill="#00ff00"/><rect x="91" y="496" width="3" height="2" fill="#ffffff"/>
<rect x="99" y="549" width="1" height="36" fill="#00ff00"/><rect x="97" y="497" width="5" height="52" fill="#00ff00"/><rect x="98" y="498" width="3" height="50" fill="#ffffff"/>
<rect x="106" y="475" width="1" height="65" fill="#00ff00"/><rect x="106" y="549" width="1" height="44" fill="#00ff00"/><rect x="104" y="540" width="5" height="9" fill="#00ff00"/><rect x="105" y="541" width="3" height="7" fill="#000000"/>
<rect x="113" y="508" width="1" height="24" fill="#00ff00"/><rect x="113" y="540" width="1" height="32" fill="#00ff00"/><rect x="111" y="532" width="5" height="8" fill="#00ff00"/><rect x="112" y="533" width="3" height="6" fill="#000000"/>
<rect x="120" y="518" width="1" height="2" fill="#00ff00"/><rect x="120" y="533" width="1" height="25" fill="#00ff00"/><rect x="118" y="520" width="5" height="13" fill="#00ff00"/><rect x="119" y="521" width="3" height="11" fill="#000000"/>
<rect x="125" y="442" width="5" height="79" fill="#00ff00"/><rect x="126" y="443" width="3" height="77" fill="#000000"/>
  <rect x="1230" y="173" width="2" height="1" fill="#fff"/>
<text x="1236" y="177" class="ax">107.730</text>
<rect x="1230" y="210" width="2" height="1" fill="#fff"/>
<text x="1236" y="214" class="ax">107.695</text>
<rect x="1230" y="246" width="2" height="1" fill="#fff"/>
<text x="1236" y="250" class="ax">107.660</text>
<rect x="1230" y="283" width="2" height="1" fill="#fff"/>
<text x="1236" y="287" class="ax">107.625</text>
<rect x="1230" y="319" width="2" height="1" fill="#fff"/>
<text x="1236" y="323" class="ax">107.590</text>
<rect x="1230" y="356" width="2" height="1" fill="#fff"/>
<text x="1236" y="360" class="ax">107.555</text>
<rect x="1230" y="392" width="2" height="1" fill="#fff"/>
<text x="1236" y="396" class="ax">107.520</text>
<rect x="1230" y="429" width="2" height="1" fill="#fff"/>
<text x="1236" y="433" class="ax">107.485</text>
<rect x="1230" y="466" width="2" height="1" fill="#fff"/>
<text x="1236" y="470" class="ax">107.450</text>
<rect x="1230" y="502" width="2" height="1" fill="#fff"/>
<text x="1236" y="506" class="ax">107.415</text>
<rect x="1230" y="539" width="2" height="1" fill="#fff"/>
<text x="1236" y="543" class="ax">107.380</text>
<rect x="1230" y="575" width="2" height="1" fill="#fff"/>
<text x="1236" y="579" class="ax">107.345</text>
<rect x="1230" y="612" width="2" height="1" fill="#fff"/>
<text x="1236" y="616" class="ax">107.310</text>
  <rect x="1230" y="417" width="4" height="1" fill="#fff"/><rect x="1234" y="410" width="41" height="14" fill="#fff"/>
  <text x="1236" y="421" class="ax" style="fill:#000">107.496</text>
  <rect x="22" y="621" width="1" height="3" fill="#fff"/>
<text x="22" y="636" class="ax" text-anchor="middle">2</text>
<rect x="106" y="621" width="1" height="3" fill="#fff"/>
<text x="106" y="636" class="ax" text-anchor="middle">03:00</text>
<rect x="526" y="621" width="1" height="3" fill="#fff"/>
<text x="526" y="636" class="ax" text-anchor="middle">18:00</text>
<rect x="610" y="621" width="1" height="3" fill="#fff"/>
<text x="610" y="636" class="ax" text-anchor="middle">21:00</text>
<rect x="694" y="621" width="1" height="3" fill="#fff"/>
<text x="694" y="636" class="ax" text-anchor="middle">3</text>
<rect x="778" y="621" width="1" height="3" fill="#fff"/>
<text x="778" y="636" class="ax" text-anchor="middle">03:00</text>
<rect x="862" y="621" width="1" height="3" fill="#fff"/>
<text x="862" y="636" class="ax" text-anchor="middle">06:00</text>
<rect x="946" y="621" width="1" height="3" fill="#fff"/>
<text x="946" y="636" class="ax" text-anchor="middle">09:00</text>
<rect x="1030" y="621" width="1" height="3" fill="#fff"/>
<text x="1030" y="636" class="ax" text-anchor="middle">12:00</text>
<rect x="1114" y="621" width="1" height="3" fill="#fff"/>
<text x="1114" y="636" class="ax" text-anchor="middle">15:00</text>
<rect x="1198" y="621" width="1" height="3" fill="#fff"/>
<text x="1198" y="636" class="ax" text-anchor="middle">18:00</text>
</svg>
  <div class="a" style="left:8px;top:9px;font-size:10.5px;color:#fff;letter-spacing:-0.3px">USDJPY</div>
  <div class="a" style="left:47px;top:9px;font-size:10px;color:#fff">、</div>
  <div class="a" style="left:56px;top:9px;font-size:10.5px;color:#fff;letter-spacing:-0.3px">M15</div>
  <div class="a" style="left:75px;top:9px;font-size:10px;color:#fff">、</div>
  <div class="a" style="left:84px;top:9px;font-size:10.5px;color:#fff;letter-spacing:-1.5px">セル</div>
  <div class="a" style="left:104px;top:9px;font-size:10.5px;color:#fff">:</div>
  <div class="a" style="left:109px;top:9px;font-size:10.5px;color:#fff;letter-spacing:-0.3px">35</div>
  <div class="a" style="left:120px;top:9px;font-size:10px;color:#fff">、</div>
  <div class="a" style="left:872px;top:409px;font-size:19.3px;color:#00ff00;-webkit-text-stroke:0.35px #00ff00">2020/7/3 (金) 16:29:30 [M15] 00:00:30</div>
  <div class="a" style="left:942px;top:435px;font-size:19.3px;color:#00ff00;-webkit-text-stroke:0.35px #00ff00;letter-spacing:-1px">21d</div>
  <div class="a" style="left:980px;top:435px;font-size:19.3px;color:#00ff00;-webkit-text-stroke:0.35px #00ff00;transform:scaleX(0.82);transform-origin:0 0">EUROPE</div>
  <div class="a" style="left:1061px;top:435px;font-size:19.3px;color:#00ff00;-webkit-text-stroke:0.35px #00ff00;letter-spacing:-0.5px">&lt;DST&gt;</div>
</div>

<!-- bottom -->
<div class="a" style="left:0;top:641px;width:1277px;height:26px;background:#fff"></div>
<div class="a" style="left:9px;top:646px;font-size:11.3px;color:#222">USDJPY,M15</div>
<div class="a" style="left:84px;top:645px;font-size:12px;color:#777">×</div>
<svg class="a" style="left:105px;top:646px" width="18" height="14">
  <rect x="4.5" y="0.5" width="13" height="9" fill="#f0f0f0" stroke="#333"/>
  <rect x="0.5" y="4.5" width="13" height="9" fill="#f0f0f0" stroke="#333"/>
</svg>
<div class="a" style="left:897px;top:644px;width:236px;height:19px;background:#efefef;border-top:1px solid #9a9a9a;border-left:1px solid #9a9a9a"></div>
<div class="a" style="left:1100px;top:653px;width:17px;height:3px;background:#888"></div>
<svg class="a" style="left:1138px;top:646px" width="70" height="15">
  <rect x="2" y="2" width="2" height="11" fill="#0d1a8a"/><path d="M4.7 7.5 L11 2 V13 Z" fill="#1e8a1e"/>
  <path d="M19.6 7.5 L26.3 2 V13 Z" fill="#1e8a1e"/>
  <path d="M47.2 7.5 L40.9 2 V13 Z" fill="#1e8a1e"/>
  <path d="M63.3 7.5 L57 2 V13 Z" fill="#1e8a1e"/><rect x="64" y="2" width="2" height="11" fill="#0d1a8a"/>
</svg>
<div class="a" style="left:1209px;top:642px;width:23px;height:22px;background:#cfe3f7;border:1px solid #9cc3ea;border-radius:3px"></div>
<svg class="a" style="left:1210px;top:643px" width="22" height="20">
  <rect x="2.5" y="1.5" width="10" height="6" fill="#fff" stroke="#1a3a8a"/><rect x="3" y="2" width="9" height="2" fill="#3a7be0"/>
  <rect x="4.5" y="5.5" width="10" height="6" fill="#fff" stroke="#1a3a8a"/><rect x="5" y="6" width="9" height="2" fill="#3a7be0"/>
  <rect x="6.5" y="9.5" width="10" height="6" fill="#fff" stroke="#1a3a8a"/><rect x="7" y="10" width="9" height="2" fill="#3a7be0"/>
  <rect x="1" y="15.5" width="18" height="2" fill="#333"/><rect x="8.5" y="15.5" width="3" height="2" fill="#4a90e2"/>
</svg>
<div class="a" style="left:1234px;top:642px;width:43px;height:22px;background:#cfe3f7;border:1px solid #9cc3ea;border-radius:3px"></div>
<div class="a" style="left:1237px;top:646px;font-size:12px;color:#111">|動ズー</div>
<div class="a" style="left:0;top:665px;width:1277px;height:3px;background:linear-gradient(#eaf2fa,#c9dff3)"></div>
<div class="a" style="left:0;top:665px;width:1px;height:32px;background:#cfe3f5"></div>
<div class="a" style="left:1px;top:668px;width:1276px;height:22px;background:#f9f9f9;border:1px solid #dcdcdc;border-right:none"></div>
<div class="a" style="left:4px;top:672px;font-size:11.5px;letter-spacing:-1.8px;color:#111">ジャーナル</div>
<div class="a" style="left:1258px;top:673px;width:12px;height:13px;background:#c9453f;color:#fff;font-size:10px;font-weight:bold;line-height:13px;text-align:center">×</div>
<div class="a" style="left:0;top:690px;width:1277px;height:4px;background:#fafcfe"></div>
<div class="a" style="left:0;top:694px;width:1277px;height:2px;background:#d3e5f6"></div>
<div class="a" style="left:0;top:697px;width:1277px;height:18px;background:#f0f0f0;border-top:1px solid #d6d6d6"></div>
<div class="a" style="left:546px;top:698px;width:1px;height:17px;background:#d0d0d0"></div>
<div class="a" style="left:671px;top:698px;width:1px;height:17px;background:#d0d0d0"></div>
<div class="a" style="left:775px;top:698px;width:1px;height:17px;background:#d0d0d0"></div>
<div class="a" style="left:879px;top:698px;width:1px;height:17px;background:#d0d0d0"></div>
<div class="a" style="left:983px;top:698px;width:1px;height:17px;background:#d0d0d0"></div>
<div class="a" style="left:1087px;top:698px;width:1px;height:17px;background:#d0d0d0"></div>
<div class="a" style="left:1190px;top:698px;width:1px;height:17px;background:#d0d0d0"></div>
<div class="a" style="left:512px;top:700px;font-size:13px;color:#111">日）</div>

<!-- dialog -->
<div id="shadowL"></div>
<div id="shadowR"></div>
<div id="dlg">
  <div id="tab">パラメーター</div>
  <div id="panel"></div>
  <div id="grid">
    <div class="hdr" style="left:6px">パラメーター</div>
    <div class="hdr" style="left:164px">バリュー</div>
    <div id="coldiv"></div>
    <div class="sec" style="top:55px;letter-spacing:0.16px">ver 1.6.3 Copyright (C) 2018-2023 RAT Trading Systems.</div>
<div class="row" style="top:74px"><span class="k">Update Time</span>
<span class="v">TICK</span></div>
<div class="sec" style="top:93px">Default : for GMT+2 US DST</div>
<div class="row" style="top:112px"><span class="k">&lt;Winter&gt; Time Shift</span>
<span class="v">7</span></div>
<div class="row" style="top:131px"><span class="k">&lt;Summer&gt; Time Shift</span>
<span class="v">6</span></div>
<div class="row" style="top:150px"><span class="k">Summer Time (DST) Period</span>
<span class="v">USA Period</span></div>
<div class="sec" style="top:169px">Text Format</div>
<div class="row" style="top:188px"><span class="k">Time Format</span>
<span class="v">&lt;hh:mm:ss&gt; Now &amp; Remaining</span></div>
<div class="row" style="top:207px"><span class="k">Remain Business Days</span>
<span class="v">Yes</span></div>
<div class="row" style="top:226px"><span class="k">Market &amp; DST Text</span>
<span class="v">Yes</span></div>
<div class="row" style="top:245px"><span class="k">Text Color</span>
<span class="v"><i class="sw" style="background:#ffffff"></i><span style="margin-left:26px">White</span></span></div>
<div class="row" style="top:264px"><span class="k">Font Size</span>
<span class="v">14</span></div>
<div class="row" style="top:283px"><span class="k">Language</span>
<span class="v">Japanese</span></div>
<div class="sec" style="top:302px">Text Position</div>
<div class="row" style="top:321px"><span class="k">Position Mode</span>
<span class="v">LOCK</span></div>
<div class="row" style="top:340px"><span class="k">Chart Corner</span>
<span class="v">Right Lower Corner</span></div>
<div class="row" style="top:359px"><span class="k">X Coordinate</span>
<span class="v">30</span></div>
<div class="row" style="top:378px"><span class="k">Y Coordinate</span>
<span class="v">20</span></div>
<div class="sec" style="top:397px">Europe Market Time</div>
<div class="sec" style="top:416px">DST : Mar(3) Last Sun &gt;&gt;&gt; Oct(10) Last Sun</div>
<div class="row" style="top:435px"><span class="k">Europe Market</span>
<span class="v">Yes</span></div>
<div class="row" style="top:454px"><span class="k">Text Color (Europe)</span>
<span class="v"><i class="sw" style="background:#00ff00"></i><span style="margin-left:26px">Lime</span></span></div>
<div class="row" style="top:473px"><span class="k">&lt;Winter&gt; Begin (Europe)</span>
<span class="v">17:00</span></div>
<div class="row" style="top:492px"><span class="k">&lt;Winter&gt; End (Europe)</span>
<span class="v">02:00</span></div>
<div class="row" style="top:511px"><span class="k">&lt;Summer&gt; Begin (Europe)</span>
<span class="v">16:00</span></div>
<div class="row" style="top:530px"><span class="k">&lt;Summer&gt; End (Europe)</span>
<span class="v">01:00</span></div>
<div class="sec" style="top:549px">USA Market Time</div>
<div class="sec" style="top:568px">DST : Mar(3) 2nd Sun &gt;&gt;&gt; Nov(11) 1st Sun</div>
<div class="row" style="top:587px"><span class="k">USA Market</span>
<span class="v">Yes</span></div>
<div class="row" style="top:606px"><span class="k">Text Color (USA)</span>
<span class="v"><i class="sw" style="background:#ffd700"></i><span style="margin-left:26px">Gold</span></span></div>
<div class="row" style="top:625px"><span class="k">&lt;Winter&gt; Begin (USA)</span>
<span class="v">22:00</span></div>
<div class="row" style="top:644px"><span class="k">&lt;Winter&gt; End (USA)</span>
<span class="v">07:00</span></div>
<div class="row" style="top:663px"><span class="k">&lt;Summer&gt; Begin (USA)</span>
<span class="v">21:00</span></div>
<div class="row" style="top:682px"><span class="k">&lt;Summer&gt; End (USA)</span>
<span class="v">06:00</span></div>
  </div>
</div>

</body></html>
